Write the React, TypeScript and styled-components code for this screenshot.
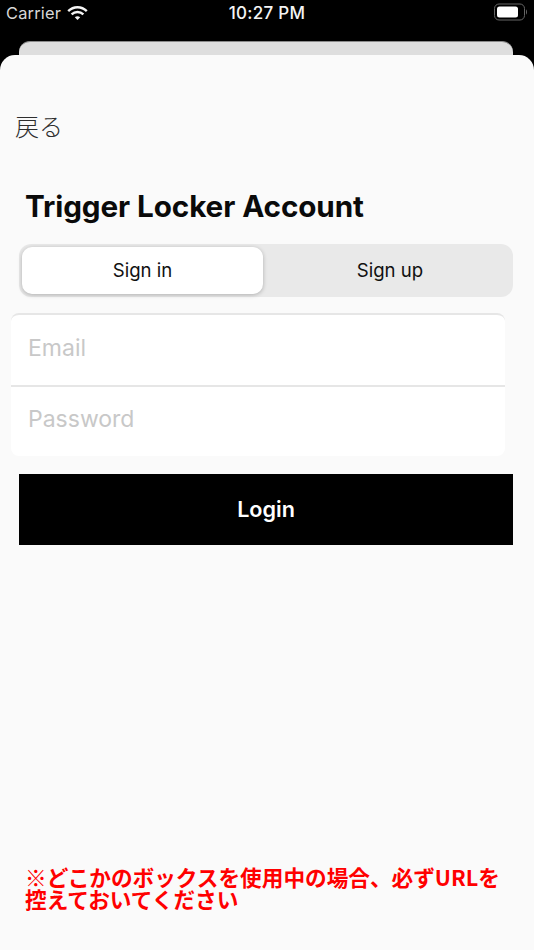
import React from "react";
import styled, { createGlobalStyle } from "styled-components";

const Global = createGlobalStyle`
  html, body { margin: 0; padding: 0; background: #000; }
  * { box-sizing: border-box; }
`;
const Screen = styled.div`
  width: 534px; height: 950px; background: #000; display: flex; flex-direction: column;
  overflow: hidden; font-family: Inter, "Noto Sans CJK JP", sans-serif; -webkit-font-smoothing: antialiased;
`;
const StatusBar = styled.div`
  height: 41px; flex: none; display: grid; grid-template-columns: 1fr auto 1fr; align-items: start;
  padding: 3px 6px 0; color: #f4f4f4; font-size: 16.4px; line-height: 20px;
`;
const Carrier = styled.div`display: flex; align-items: center; gap: 6px; letter-spacing: 0.2px; color: #d8d8d8;`;
const Clock = styled.div`font-size: 17px; font-weight: 500; letter-spacing: 0.3px;`;
const Battery = styled.svg`justify-self: end;`;
const BackCard = styled.div`
  height: 14px; flex: none; margin: 0 21px 0 19px; background: #dedede;
  border-radius: 11px 11px 0 0; border-top: 1px solid #8a8a8a;
`;
const Sheet = styled.div`
  flex: 1; background: #fafafa; border-radius: 15px 15px 0 0; display: flex; flex-direction: column;
`;
const Back = styled.div`
  margin: 57px 0 0 15px; height: 28px; font-size: 24px; line-height: 28px; color: #2e2e2e;
  font-family: "Noto Sans CJK JP", sans-serif; font-weight: 300;
`;
const Title = styled.h1`
  margin: 46px 0 0 25px; height: 40px; font-size: 29.7px; line-height: 40px; font-weight: 700; color: #0a0a0a;
  letter-spacing: -0.1px;
`;
const Segment = styled.div`
  margin: 18px 21px 0 19px; height: 53px; background: #e9e9e9; border-radius: 12px; padding: 3px;
  display: grid; grid-template-columns: 241px 1fr;
`;
const SegmentTab = styled.div<{ $active?: boolean }>`
  display: flex; align-items: center; justify-content: center; height: 47px; font-size: 18.6px; color: #111;
  border-radius: 10px; font-weight: 400;
  padding-bottom: 1px;
  padding-left: ${(p) => (p.$active ? "0" : "7px")};
  background: ${(p) => (p.$active ? "#fff" : "transparent")};
  box-shadow: ${(p) => (p.$active ? "0 1px 4px rgba(0,0,0,0.25)" : "none")};
`;
const Form = styled.div`
  margin: 16px 29px 0 11px; background: #fff; border-radius: 8px; border-top: 2px solid #e6e6e6;
`;
const Field = styled.div<{ $first?: boolean }>`
  height: ${(p) => (p.$first ? "70px" : "71px")}; padding: 0 0 5px 17px; display: flex; align-items: center;
  font-size: 23px; color: #c8c8c8;
  border-top: ${(p) => (p.$first ? "none" : "2px solid #e6e6e6")};
`;
const LoginButton = styled.div`
  margin: 18px 21px 0 19px; height: 71px; padding-bottom: 2px; background: #000; color: #fff; display: flex;
  align-items: center; justify-content: center; font-size: 21.6px; font-weight: 600;
`;
const Note = styled.div`
  margin: auto 25px 40px 25px; color: #ff0000; font-size: 21.65px; line-height: 22px; font-weight: 700;
  font-family: "Noto Sans CJK JP", sans-serif;
`;

export default function App() {
  return (
    <Screen>
      <Global />
      <StatusBar>
        <Carrier>
          Carrier
          <svg width="21" height="16" viewBox="0 0 21 16" fill="none" stroke="#f4f4f4" strokeWidth="2.4">
            <path d="M1.2 6.2 C6.5 1 14.5 1 19.8 6.2" />
            <path d="M4.6 9.4 C8 6.2 13 6.2 16.4 9.4" />
            <path d="M10.5 15 L7.8 12.2 C9.3 11 11.7 11 13.2 12.2 Z" fill="#f4f4f4" stroke="none" />
          </svg>
        </Carrier>
        <Clock>10:27 PM</Clock>
        <Battery width="34" height="18" viewBox="0 0 34 18">
          <rect x="0.5" y="1" width="30" height="16" rx="4.5" fill="none" stroke="#666" />
          <rect x="3" y="3.5" width="21" height="11" rx="2.5" fill="#fff" />
          <path d="M32 6.5 C33.3 7 33.3 11 32 11.5 Z" fill="#666" />
        </Battery>
      </StatusBar>
      <BackCard />
      <Sheet>
        <Back>戻る</Back>
        <Title>Trigger Locker Account</Title>
        <Segment>
          <SegmentTab $active>Sign in</SegmentTab>
          <SegmentTab>Sign up</SegmentTab>
        </Segment>
        <Form>
          <Field $first>Email</Field>
          <Field>Password</Field>
        </Form>
        <LoginButton>Login</LoginButton>
        <Note>※どこかのボックスを使用中の場合、必ずURLを控えておいてください</Note>
      </Sheet>
    </Screen>
  );
}
